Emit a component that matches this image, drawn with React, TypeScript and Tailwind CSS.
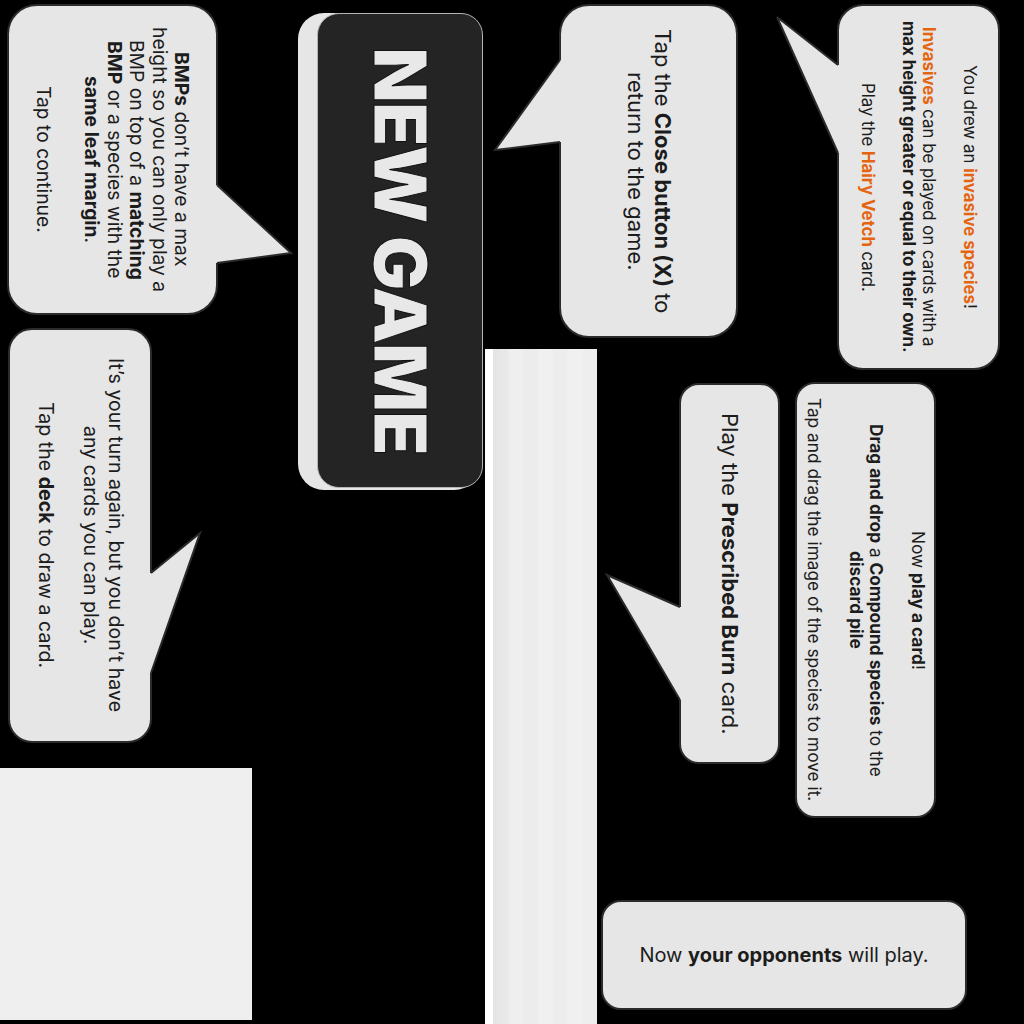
import React from "react";

type Pt = [number, number];

// tails of the speech bubbles, in canvas coordinates
const tails: { side: "left" | "right"; x: number; y1: number; y2: number; tip: Pt }[] = [
  { side: "right", x: 218, y1: 185, y2: 263, tip: [291, 253] },
  { side: "left", x: 559, y1: 60, y2: 142, tip: [495, 150] },
  { side: "left", x: 837, y1: 65, y2: 153, tip: [777, 17] },
  { side: "right", x: 152, y1: 573, y2: 673, tip: [200, 533] },
  { side: "left", x: 679, y1: 607, y2: 700, tip: [607, 575] },
];

const Tails = () => (
  <svg className="absolute left-0 top-0" width={1024} height={1024} viewBox="0 0 1024 1024">
    {tails.map((t, i) => {
      const inner = t.side === "left" ? t.x + 4 : t.x - 4;
      const edge = t.side === "left" ? t.x + 1 : t.x - 1;
      return (
        <g key={i}>
          <polygon
            points={`${inner},${t.y1} ${edge},${t.y1} ${t.tip[0]},${t.tip[1]} ${edge},${t.y2} ${inner},${t.y2}`}
            fill="#e6e6e6"
          />
          <polyline
            points={`${edge},${t.y1} ${t.tip[0]},${t.tip[1]} ${edge},${t.y2}`}
            fill="none"
            stroke="#2b2b2b"
            strokeWidth={2}
            strokeLinejoin="miter"
          />
        </g>
      );
    })}
  </svg>
);

const Bubble = ({ className, children }: { className: string; children: React.ReactNode }) => (
  <div
    className={`absolute flex items-center justify-center border-2 border-[#2b2b2b] bg-[#e6e6e6] text-[#1c1c1c] ${className}`}
  >
    {children}
  </div>
);

const Orange = ({ children }: { children: React.ReactNode }) => (
  <b className="font-bold text-[#e5640f]">{children}</b>
);

const App = () => {
  return (
    <div className="relative h-[1024px] w-[1024px] overflow-hidden bg-black font-[Inter,sans-serif]">
      {/* plain light tile */}
      <div className="absolute left-0 top-[768px] h-[252px] w-[252px] bg-[#efefef]" />

      {/* striped strip */}
      <div className="absolute left-[485px] top-[349px] flex h-[675px] w-[112px]">
        <div className="w-[8px] bg-white" />
        <div className="w-[16px] bg-gradient-to-r from-[#e4e4e4] to-[#eaeaea]" />
        <div className="w-[14px] bg-[#efefef]" />
        <div className="w-[15px] bg-[#ececec]" />
        <div className="w-[15px] bg-[#f0f0f0]" />
        <div className="w-[14px] bg-[#ededed]" />
        <div className="w-[15px] bg-[#f0f0f0]" />
        <div className="w-[15px] bg-[#eeeeee]" />
      </div>

      {/* NEW GAME button */}
      <div className="absolute left-[298px] top-[13px] h-[477px] w-[182px] rounded-[26px] bg-[#e6e6e6]" />
      <div className="absolute left-[317px] top-[13px] flex h-[475px] w-[166px] items-center justify-center rounded-[22px] border border-[#b5b5b5] bg-[#242424]">
        <span className="whitespace-nowrap text-[73px] font-black leading-none tracking-[-1.5px] text-[#e8e8e8] [-webkit-text-stroke:1px_#111] [writing-mode:vertical-rl]">
          NEW GAME
        </span>
      </div>

      {/* BMPs */}
      <Bubble className="left-[7px] top-[4px] h-[311px] w-[211px] rounded-[30px]">
        <div className="flex flex-col items-center gap-[26px] whitespace-nowrap text-center text-[19.3px] leading-[22.5px] [writing-mode:vertical-rl]">
          <p>
            <b>BMPs</b> don’t have a max
            <br />
            height so you can only play a
            <br />
            BMP on top of a <b>matching</b>
            <br />
            <b>BMP</b> or a species with the
            <br />
            <b>same leaf margin</b>.
          </p>
          <p>Tap to continue.</p>
        </div>
      </Bubble>

      {/* Close button */}
      <Bubble className="left-[559px] top-[4px] h-[334px] w-[179px] rounded-[30px]">
        <p className="whitespace-nowrap text-center text-[22px] leading-[27px] [writing-mode:vertical-rl]">
          Tap the <b>Close button (X)</b> to
          <br />
          return to the game.
        </p>
      </Bubble>

      {/* Invasives */}
      <Bubble className="left-[837px] top-[4px] h-[366px] w-[163px] rounded-[26px]">
        <div className="flex flex-col items-center gap-[21px] whitespace-nowrap text-center text-[16.8px] leading-[20px] [writing-mode:vertical-rl]">
          <p>
            You drew an <Orange>invasive species</Orange>!
          </p>
          <p>
            <Orange>Invasives</Orange> can be played on cards with a
            <br />
            <b>max height greater or equal to their own.</b>
          </p>
          <p>
            Play the <Orange>Hairy Vetch</Orange> card.
          </p>
        </div>
      </Bubble>

      {/* Your turn again */}
      <Bubble className="left-[8px] top-[328px] h-[415px] w-[144px] rounded-[24px]">
        <div className="flex flex-col items-center gap-[20px] whitespace-nowrap text-center text-[19.6px] leading-[25px] [writing-mode:vertical-rl]">
          <p>
            It’s your turn again, but you don’t have
            <br />
            any cards you can play.
          </p>
          <p>
            Tap the <b>deck</b> to draw a card.
          </p>
        </div>
      </Bubble>

      {/* Prescribed Burn */}
      <Bubble className="left-[679px] top-[383px] h-[381px] w-[101px] rounded-[20px]">
        <p className="whitespace-nowrap text-center text-[22px] leading-[27px] [writing-mode:vertical-rl]">
          Play the <b>Prescribed Burn</b> card.
        </p>
      </Bubble>

      {/* Play a card */}
      <Bubble className="left-[795px] top-[382px] h-[436px] w-[141px] rounded-[20px]">
        <div className="flex flex-col items-center gap-[22px] whitespace-nowrap text-center text-[17.3px] leading-[20px] [writing-mode:vertical-rl]">
          <p>
            Now <b>play a card</b>!
          </p>
          <p>
            <b>Drag and drop</b> a <b>Compound species</b> to the
            <br />
            <b>discard pile</b>
          </p>
          <p>Tap and drag the image of the species to move it.</p>
        </div>
      </Bubble>

      {/* Opponents */}
      <Bubble className="left-[601px] top-[900px] h-[110px] w-[366px] rounded-[20px]">
        <p className="whitespace-nowrap text-[20px] leading-[24px]">
          Now <b>your opponents</b> will play.
        </p>
      </Bubble>

      <Tails />
    </div>
  );
};

export default App;
